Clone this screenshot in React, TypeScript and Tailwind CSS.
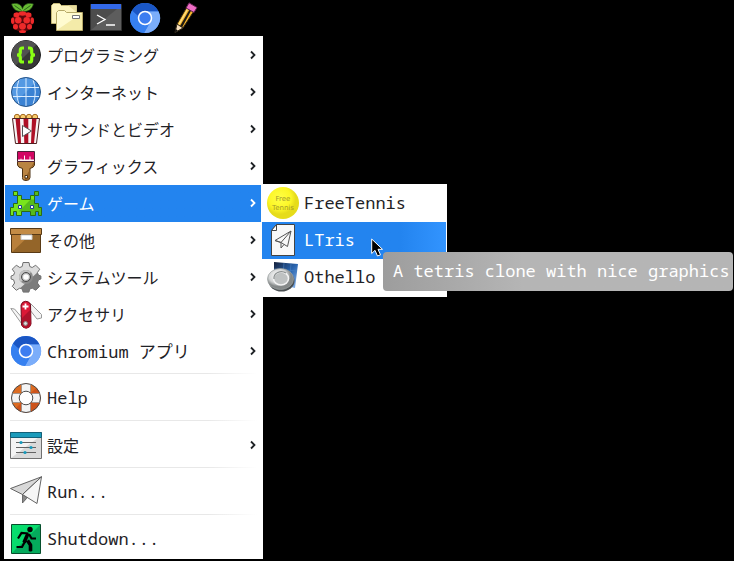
import type { ReactNode } from "react";

type IconProps = { children: ReactNode; className?: string };

function Icon({ children, className = "size-8" }: IconProps) {
  return (
    <svg viewBox="0 0 32 32" className={`shrink-0 ${className}`} aria-hidden="true">
      {children}
    </svg>
  );
}

const ChromiumIcon = () => (
  <Icon>
    <circle cx="16" cy="16" r="15" fill="#3b80ee" />
    <path d="M3 8.500A15 15 0 0 1 29.500 9.500H16a6.500 6.500 0 0 0-6.300 5z" fill="#1a56c4" />
    <path d="M16 9.500H29.600A15 15 0 0 1 15 31L21.700 19.300A6.500 6.500 0 0 0 16 9.500z" fill="#7badfa" />
    <path d="M3 8.500A15 15 0 0 0 15 31L21.700 19.300A6.500 6.500 0 0 1 10.300 19.300z" fill="#3680f0" />
    <circle cx="16" cy="16" r="6.500" fill="#3c7df0" stroke="#fff" strokeWidth="1.500" />
  </Icon>
);

const RaspberryIcon = () => (
  <Icon>
    <path d="M16.500 9.500C11 10 7 7.500 5.500 2 9.500 .500 15 1.500 16.500 6.500 18 1.500 23.500 .500 27.500 2 26 7.500 22 10 16.500 9.500z" fill="#66b933" stroke="#1c3a12" strokeWidth=".7" />
    <path d="M8.500 3.500l7 5M24.500 3.500l-7 5" stroke="#2b641a" />
    <path d="M10 10h13l5 8-3 9-8.500 4L8 27l-3-9z" fill="#5c080c" />
    <g fill="#ee2a2a">
      <ellipse cx="16.500" cy="11.500" rx="3.600" ry="2.200" />
      <ellipse cx="10.500" cy="13" rx="3" ry="2.400" />
      <ellipse cx="22.500" cy="13" rx="3" ry="2.400" />
      <ellipse cx="6.700" cy="18.700" rx="1.700" ry="3.300" />
      <ellipse cx="26.300" cy="18.700" rx="1.700" ry="3.300" />
      <circle cx="12.300" cy="18.200" r="3.300" />
      <circle cx="20.700" cy="18.200" r="3.300" />
      <ellipse cx="9.500" cy="24.800" rx="2.500" ry="2.700" />
      <ellipse cx="23.500" cy="24.800" rx="2.500" ry="2.700" />
      <circle cx="16.500" cy="24.300" r="3.400" />
      <ellipse cx="16.500" cy="29.500" rx="3.500" ry="1.500" />
    </g>
  </Icon>
);

const FilesIcon = () => (
  <Icon>
    <path d="M.500 21.500V3.500L2.500 1.500H8.500L10.500 3.500H25.500V21.500z" fill="#fcf3be" stroke="#c3b777" />
    <path d="M17 3.500h8.500V10z" fill="#e8dc9e" />
    <path d="M5.500 28.500V10.500L7.500 8.500H13.500L15.500 10.500H31.500V28.500z" fill="#fffbd0" stroke="#b6a968" />
    <path d="M6 28L31 11V28z" fill="#f4eba9" />
    <path d="M21.500 13.500h7v3h-7z" fill="#fff" stroke="#777" />
  </Icon>
);

const TerminalIcon = () => (
  <Icon>
    <path d="M.500 2.500h31v26h-31z" fill="#4c4c4c" stroke="#303030" />
    <path d="M1 28L27 7H31V28z" fill="#5d5d5d" />
    <path d="M1 2h30v5H1z" fill="#3268e8" />
    <path d="M7 13l8 4.500L7 22M16 23h9" fill="none" stroke="#fff" strokeWidth="1.300" />
  </Icon>
);

const PencilIcon = () => (
  <Icon>
    <path d="M7 30.500L9 22 20 3l7 4.500L15 26z" fill="#f6b52c" stroke="#2a2112" />
    <path d="M12 24L23 5l1.500 1L14 25.500z" fill="#1f1a12" />
    <path d="M10 22.500L20.500 4.500l1 .6L11.500 23z" fill="#ffe084" />
    <path d="M18 6L21 .800 29 5.500 26 10.500z" fill="#ee6cc5" stroke="#57204a" />
    <path d="M7 30.500L9 22l6 4z" fill="#f7dfbe" stroke="#2a2112" />
    <path d="M7 30.500l.8-3.500 2 1.500z" fill="#111" />
  </Icon>
);

const CodeIcon = () => (
  <Icon>
    <circle cx="16" cy="16" r="14.500" fill="#363636" stroke="#1d1d1d" />
    <path d="M5.800 26.200A14.400 14.400 0 0 1 26.200 5.800z" fill="#515151" />
    <path
      d="M14 9H12.300Q10.300 9 10.300 11.300V13.500Q10.300 16 7 16 10.300 16 10.300 18.500V20.700Q10.300 23 12.300 23h1.700M18 9h1.700Q21.700 9 21.700 11.300V13.500Q21.700 16 25 16 21.700 16 21.700 18.500V20.700Q21.700 23 19.700 23H18"
      fill="none"
      stroke="#8aff14"
      strokeWidth="3.200"
    />
  </Icon>
);

const GlobeIcon = () => (
  <Icon>
    <circle cx="16" cy="16" r="14.500" fill="#3a82d3" />
    <path d="M5.800 26.200A14.400 14.400 0 0 1 26.200 5.800z" fill="#5499e3" />
    <path d="M1.500 11.500h29M1.500 20.500h29M16 1.500v29M9 3.500Q4.500 16 9 28.500M23 3.500Q27.500 16 23 28.500" fill="none" stroke="#d9ecff" />
    <circle cx="16" cy="16" r="14.500" fill="none" stroke="#285589" />
  </Icon>
);

const PopcornIcon = () => (
  <Icon>
    <g fill="#f9cc6b" stroke="#a56b25">
      <circle cx="7" cy="4" r="2.700" />
      <circle cx="13" cy="4" r="2.700" />
      <circle cx="19" cy="4" r="2.700" />
      <circle cx="25" cy="4" r="2.700" />
    </g>
    <path d="M2.500 5.500h27L26.500 30.500h-21z" fill="#f7f4f4" />
    <path d="M5.500 6h4.500l1 24H8zM13.500 6h4.800v24h-4zM22 6h4.500L24 30h-3z" fill="#ae1026" />
    <path d="M2.500 5.500h27L26.500 30.500h-21z" fill="none" stroke="#4f2021" />
    <path d="M12.500 12.500v11L21.500 18z" fill="#fff" stroke="#555" />
  </Icon>
);

const BrushIcon = () => (
  <Icon>
    <path d="M7.500 11.500h17v3.500Q24 17.500 20 18.500v9Q20 30.500 16 30.500T12.500 27.500v-9Q8 17.500 7.500 15z" fill="#b98443" stroke="#4d3214" />
    <path d="M24 12v3q-1 2-4.500 3.200V27q0 3-3.500 3h-2z" fill="#976225" />
    <path d="M7.500 1.500h17v10h-17z" fill="#fff6f8" stroke="#4d2236" />
    <path d="M8 2h16v7.500H20.500V7l-.5-1-.5 1v2.500H15V6l-.5-1-.5 1v3.500H11.500L11 8l-.5 1.500H8z" fill="#d30663" />
    <path d="M15 25.500h2.500v2.500H15z" fill="#fff" stroke="#4d3214" />
  </Icon>
);

const invaderPath =
  "M3.500 4.500h4v4h4v4h9v-4h4v-4h4v4h-4v8h4v4h3v8h-3v-4h-3v4h-5v-4h-9v4h-5v-4h-3v4h-3v-8h3v-4h4v-8h-4z";

const InvaderIcon = () => (
  <Icon>
    <path d={invaderPath} fill="#79e51d" />
    <path d="M8.500 24.500L20.500 12.500h4v4h4v4h3v8h-3v-4h-3v4h-5v-4zM24.500 4.500h4v4h-4z" fill="#56bb1c" />
    <path d={invaderPath} fill="none" stroke="#2c6b14" />
    <path d="M8.500 18.500h3v3h-3zM20.500 18.500h3v3h-3z" fill="#fff" stroke="#1f3f92" />
  </Icon>
);

const BoxIcon = () => (
  <Icon>
    <path d="M1.500 9.500h29v19h-29z" fill="#b9803b" />
    <path d="M2 28L22 9h8v19z" fill="#946529" />
    <path d="M1.500 9.500h29v19h-29z" fill="none" stroke="#593a15" />
    <path d="M.500 4.500h31v6H.500z" fill="#c38b45" stroke="#593a15" />
    <path d="M11 11h11v4.500H11z" fill="#fff" stroke="#ccc" />
  </Icon>
);

const gearPath =
  "M13 1.500h6l.8 4 2.400 1 3.500-2.300 4 4-2.300 3.400 1 2.500 2.500.9v3l-2.500.8-1 3.200 2.300 3.300-4 4-3.500-2.200-2.500 1-.8 3h-5.800l-.8-3-2.500-1-3.500 2.200-4-4 2.300-3.300-1-3.200-2.500-.8v-3l2.500-.9 1-2.500L2.300 8.200l4-4 3.500 2.300 2.400-1z";

const GearIcon = () => (
  <Icon>
    <path d={gearPath} fill="#dcdcdc" />
    <path d="M27.400 11.600l1 2.500 2.500.9v3l-2.500.8-1 3.200 2.300 3.300-4 4-3.500-2.200-2.500 1-.8 3h-5.800l-.8-3-2-1z" fill="#7c7c7c" />
    <path d={gearPath} fill="none" stroke="#707070" />
    <circle cx="16" cy="16" r="7" fill="#8a8a8a" />
    <path d="M11 21a7 7 0 0 1 10-10z" fill="#c4c4c4" />
    <circle cx="16" cy="16" r="4.500" fill="#bbb" stroke="#4a4a4a" />
    <circle cx="16" cy="16" r="2.800" fill="#fff" />
  </Icon>
);

const KnifeIcon = () => (
  <Icon>
    <path d="M.800 10.500L4.500 11 14 22v7zM20 5l11.500 11.500v3.500L27 21l-7-9z" fill="#f5f5f5" stroke="#999" />
    <path d="M11 7a5 5 0 0 1 9.500-.500l.5 19.500a5 5 0 0 1-9.500 1z" fill="#db1836" stroke="#720b1d" />
    <path d="M20 12l.6 13.500a4.600 4.600 0 0 1-8.600 2.500v-8z" fill="#ad122b" />
    <path d="M15.500 5.500v6M12.500 8.500h6" stroke="#fff" strokeWidth="1.800" />
    <circle cx="15.500" cy="25.500" r="1.900" fill="#ddd" stroke="#888" />
  </Icon>
);

const LifebuoyIcon = () => (
  <Icon>
    <circle cx="16" cy="16" r="10.500" fill="none" stroke="#dc6c22" strokeWidth="8" />
    <path d="M8.500 23.500A10.500 10.500 0 0 0 23.500 8.500" fill="none" stroke="#cd541c" strokeWidth="8" />
    <path d="M11.500 1.700h9v8.500h-9zM11.500 21.800h9v8.500h-9zM1.700 11.500h8.500v9H1.700zM21.800 11.500h8.500v9h-8.500z" fill="#f4f4f4" />
    <circle cx="16" cy="16" r="14.500" fill="none" stroke="#4a4a4a" />
    <circle cx="16" cy="16" r="6.800" fill="#fff" stroke="#4a4a4a" />
    <path d="M11.500 2v8M20.500 2v8M11.500 22v8M20.500 22v8M2 11.500h8M2 20.500h8M22 11.500h8M22 20.500h8" stroke="#888" strokeWidth=".7" />
  </Icon>
);

const SettingsIcon = () => (
  <Icon>
    <path d="M.500 3.500h31v26H.500z" fill="#f4f4f4" stroke="#707070" />
    <path d="M1 29L29 8h2v21z" fill="#d9d9d9" />
    <path d="M.500 3.500h31v5H.500z" fill="#1b9bbb" stroke="#136078" />
    <path d="M6 13.500h20M6 18.500h20M6 23.500h20" stroke="#636363" />
    <circle cx="11" cy="13.500" r="1.600" fill="#1499bb" />
    <circle cx="21" cy="18.500" r="1.600" fill="#1499bb" />
    <circle cx="15" cy="23.500" r="1.600" fill="#1499bb" />
  </Icon>
);

const PlaneIcon = () => (
  <Icon>
    <path d="M12.500 17.500v9.500l4-4.500L31 1z" fill="#8a8a8a" stroke="#555" strokeWidth=".8" />
    <path d="M.500 12.500L31.500.800 12.500 18.500z" fill="#d8d8d8" stroke="#555" strokeWidth=".9" />
    <path d="M12.500 18.500L31.500.800 27 27.500z" fill="#f6f6f6" stroke="#555" strokeWidth=".9" />
  </Icon>
);

const ExitIcon = () => (
  <Icon>
    <path d="M1.500 1.500h29v29h-29z" fill="#05aa5c" />
    <path d="M2 30V2h28z" fill="#07dc6d" />
    <path d="M1.500 1.500h29v29h-29z" fill="none" stroke="#064f2c" />
    <circle cx="20" cy="6.500" r="2.700" />
    <path d="M18 10.500l-4 9M17.500 17.500l3 4.500v6" fill="none" stroke="#000" strokeWidth="3.600" strokeLinejoin="round" />
    <path d="M18.500 10.500L11.500 9.800 8 15.500M19 11l2.500 4.500H26M15 18.500l-3 5.500H6.500M20.500 27.500v1" fill="none" stroke="#000" strokeWidth="2.200" />
  </Icon>
);

const TennisIcon = () => (
  <Icon>
    <defs>
      <radialGradient id="ball" cx="40%" cy="35%">
        <stop offset="0" stopColor="#ffff45" />
        <stop offset=".7" stopColor="#fcf626" />
        <stop offset="1" stopColor="#e6dc1a" />
      </radialGradient>
    </defs>
    <circle cx="16" cy="16" r="16" fill="url(#ball)" />
    <g fill="#a39a2a" fontSize="7" textAnchor="middle" className="font-['DejaVu_Sans',sans-serif]">
      <text x="16" y="14">Free</text>
      <text x="16" y="23">Tennis</text>
    </g>
  </Icon>
);

const DocumentIcon = () => (
  <Icon>
    <path d="M4.500 6.500L9.500.500h18v31h-23z" fill="#f8f8f8" stroke="#444" />
    <path d="M4.500 6.500h5v-6z" fill="#fff" stroke="#444" />
    <path d="M8 16.500L24 7l-3.500 15.500-6.500-4zM24 7L14 18.500v5.500l3-3.500M14 18.500L8 16.500" fill="none" stroke="#555" />
  </Icon>
);

const OthelloIcon = () => (
  <Icon>
    <defs>
      <linearGradient id="board" x1="0" y1="0" x2="1" y2="1">
        <stop offset="0" stopColor="#15203a" />
        <stop offset=".5" stopColor="#2863ad" />
        <stop offset="1" stopColor="#8fbaf0" />
      </linearGradient>
      <radialGradient id="disc" cx="40%" cy="35%">
        <stop offset="0" stopColor="#fff" />
        <stop offset=".7" stopColor="#d2d4d4" />
        <stop offset="1" stopColor="#858989" />
      </radialGradient>
    </defs>
    <path d="M7 1l24 2-3 24-21-5z" fill="url(#board)" />
    <path d="M17 2l-1 12M24 2.500l-1 12M7 8l23 2" stroke="#4a83c5" strokeWidth=".6" />
    <ellipse cx="14.500" cy="20" rx="13" ry="10.500" fill="#4b5052" />
    <ellipse cx="13.500" cy="18" rx="13" ry="10.500" fill="url(#disc)" stroke="#9ba0a0" strokeWidth=".7" />
    <ellipse cx="14" cy="17.500" rx="7.500" ry="6.500" fill="#bfc2c2" stroke="#f4f4f4" strokeWidth="1.500" />
    <path d="M7 18a7.500 6.500 0 0 1 12-6" fill="none" stroke="#8b9090" strokeWidth="1.200" />
  </Icon>
);

type Entry = { label: string; icon: ReactNode; arrow?: boolean; active?: boolean; latin?: boolean };

const groups: Entry[][] = [
  [
    { label: "プログラミング", icon: <CodeIcon />, arrow: true },
    { label: "インターネット", icon: <GlobeIcon />, arrow: true },
    { label: "サウンドとビデオ", icon: <PopcornIcon />, arrow: true },
    { label: "グラフィックス", icon: <BrushIcon />, arrow: true },
    { label: "ゲーム", icon: <InvaderIcon />, arrow: true, active: true },
    { label: "その他", icon: <BoxIcon />, arrow: true },
    { label: "システムツール", icon: <GearIcon />, arrow: true },
    { label: "アクセサリ", icon: <KnifeIcon />, arrow: true },
    { label: "Chromium アプリ", icon: <ChromiumIcon />, arrow: true, latin: true },
  ],
  [{ label: "Help", icon: <LifebuoyIcon />, latin: true }],
  [{ label: "設定", icon: <SettingsIcon />, arrow: true }],
  [{ label: "Run...", icon: <PlaneIcon />, latin: true }],
  [{ label: "Shutdown...", icon: <ExitIcon />, latin: true }],
];

const games: Entry[] = [
  { label: "FreeTennis", icon: <TennisIcon />, latin: true },
  { label: "LTris", icon: <DocumentIcon />, active: true, latin: true },
  { label: "Othello", icon: <OthelloIcon />, latin: true },
];

const launchers = [
  { name: "Menu", icon: <RaspberryIcon />, className: "mr-[13px]" },
  { name: "File Manager", icon: <FilesIcon />, className: "mr-[7px]" },
  { name: "Terminal", icon: <TerminalIcon />, className: "mr-[7px]" },
  { name: "Chromium", icon: <ChromiumIcon />, className: "mr-[7px]" },
  { name: "Text Editor", icon: <PencilIcon />, className: "" },
];

function MenuButton({ entry }: { entry: Entry }) {
  return (
    <button
      type="button"
      role="menuitem"
      aria-haspopup={entry.arrow ? "menu" : undefined}
      className={`flex h-[37px] w-full items-start gap-[5px] pt-0.5 pr-[5px] pl-[5px] text-left ${
        entry.active ? "bg-linear-to-r from-[#2384ef] from-75% text-white" : "text-[#1f2226]"
      } ${entry.arrow ? "to-[#2384ef]" : "to-[#3294ff]"}`}
    >
      {entry.icon}
      <span
        className={`grow whitespace-nowrap ${entry.latin ? "text-[17px]" : "text-[16px]"} ${
          entry.arrow ? "leading-[34px]" : "leading-8"
        }`}
      >
        {entry.label}
      </span>
      {entry.arrow && (
        <svg viewBox="0 0 8 32" className="h-8 w-2 shrink-0" aria-hidden="true">
          <path d="M2 12.500l3.500 3.500L2 19.500" fill="none" stroke="currentColor" strokeWidth="1.800" />
        </svg>
      )}
    </button>
  );
}

function Cursor() {
  return (
    <svg viewBox="0 0 12 19" className="absolute top-4 left-[109px] z-10 h-[19px] w-3" aria-hidden="true">
      <path d="M.700 1v14.500L4 12.300 6.500 18l3-1.200L7 11.300h4.500z" fill="#000" stroke="#fff" />
    </svg>
  );
}

function GamesMenu() {
  return (
    <ul role="menu" className="absolute -top-px left-full z-10 -ml-px w-[186px] bg-white p-px">
      {games.map((game) => (
        <li key={game.label} className={game.active ? "relative z-10" : ""}>
          <MenuButton entry={game} />
          {game.active && (
            <>
              <Cursor />
              <div
                role="tooltip"
                className="absolute top-[30px] left-[121px] rounded bg-linear-to-r from-[#9d9d9d] to-[#b5b5b5] to-40% pr-[3px] pb-0.5 pl-2.5 text-[17px] leading-[37px] whitespace-nowrap text-white"
              >
                A tetris clone with nice graphics
              </div>
            </>
          )}
        </li>
      ))}
    </ul>
  );
}

export default function App() {
  return (
    <div className="min-h-screen bg-black font-['Noto_Sans_Mono','DejaVu_Sans_Mono','Noto_Sans_CJK_JP',monospace]">
      <header className="flex h-9 items-start pt-0.5 pl-1.5">
        {launchers.map((item) => (
          <button key={item.name} type="button" aria-label={item.name} className={item.className}>
            {item.icon}
          </button>
        ))}
      </header>

      <nav className="ml-1 w-[259px] bg-white p-px">
        {groups.map((group, i) => (
          <div key={i}>
            {i > 0 && (
              <div className="h-2.5 px-[5px] pt-[3px]">
                <div className="h-px bg-linear-to-r from-[#e8e8e8] from-80% to-white" />
              </div>
            )}
            <ul role="menu">
              {group.map((entry) => (
                <li key={entry.label} className={entry.active ? "relative" : ""}>
                  <MenuButton entry={entry} />
                  {entry.active && <GamesMenu />}
                </li>
              ))}
            </ul>
          </div>
        ))}
      </nav>
    </div>
  );
}
